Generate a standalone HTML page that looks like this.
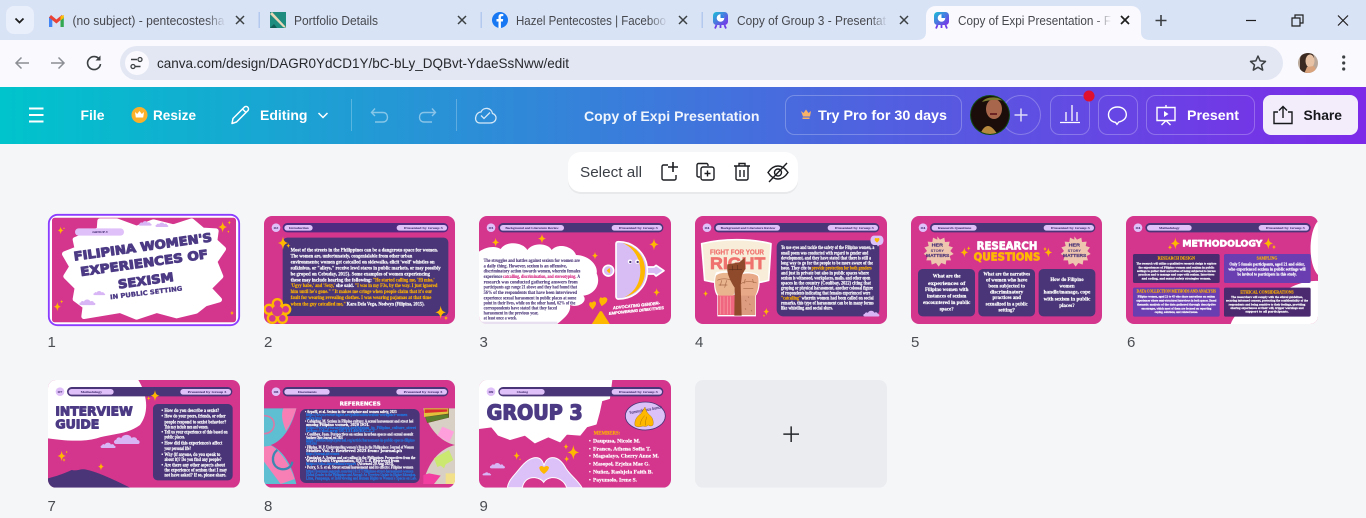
<!DOCTYPE html>
<html lang="en"><head><meta charset="utf-8"><title>Copy of Expi Presentation</title>
<style>
html,body{margin:0;padding:0;width:1366px;height:518px;overflow:hidden;background:#f5f6f8}
svg{display:block;position:absolute;left:0;top:0}
text{font-family:"Liberation Sans",sans-serif}
.t{font-size:12.5px;fill:#46484d}
.h{font-size:14px;font-weight:bold;fill:#fff}
.w{font-family:"Liberation Serif",serif;font-size:15px;font-weight:bold;fill:#fff;stroke:#fff;stroke-width:.5}
.y{font-family:"Liberation Serif",serif;font-size:15px;font-weight:bold;fill:#ffb300;stroke:#ffb300;stroke-width:.4}
.b{font-family:"Liberation Serif",serif;font-size:13.5px;font-weight:bold;fill:#1f7ae8;stroke:#1f7ae8;stroke-width:.4}
.d{font-family:"Liberation Serif",serif;font-size:14.5px;font-weight:bold;fill:#4a3578;stroke:#4a3578;stroke-width:.3}
.p{font-family:"Liberation Serif",serif;font-size:10.5px;font-weight:bold;fill:#4a3578;stroke:#4a3578;stroke-width:.2}
.n{font-size:15px;fill:#4a4d52}
.c{font-family:"DejaVu Sans",sans-serif;font-weight:bold;fill:#4c3a85;stroke:#4c3a85;stroke-width:3;stroke-linejoin:round}
.hd{font-family:"DejaVu Sans",sans-serif;font-weight:bold;stroke-width:2;stroke-linejoin:round}
</style></head><body>
<svg width="1366" height="518" viewBox="0 0 1366 518" xmlns="http://www.w3.org/2000/svg">
<defs>
<linearGradient id="g" x1="0" x2="1" y1="0" y2="0"><stop offset="0" stop-color="#00c4cc"/><stop offset=".5" stop-color="#3f76dc"/><stop offset="1" stop-color="#7d2ae8"/></linearGradient>
<linearGradient id="fade" x1="0" x2="1"><stop offset="0" stop-color="#d8e3f6" stop-opacity="0"/><stop offset="1" stop-color="#d8e3f6"/></linearGradient>
<linearGradient id="fadeA" x1="0" x2="1"><stop offset="0" stop-color="#f9f9fe" stop-opacity="0"/><stop offset="1" stop-color="#f9f9fe"/></linearGradient>
<linearGradient id="cv" x1="0" x2="1" y1="0" y2="1"><stop offset="0" stop-color="#19c3d6"/><stop offset="1" stop-color="#7d2ae8"/></linearGradient>
<path id="s" fill="#ffb800" d="M0-10C1-3 3-1 8 0 3 1 1 3 0 10-1 3-3 1-8 0-3-1-1-3 0-10Z"/>
<path id="cl" fill="#d8b6f5" d="M-30 10C-38 10-38 0-30-1-29-8-20-8-18-4-14-15 4-16 8-5 14-9 22-6 22 0 30 0 30 10 24 10Z"/>
<clipPath id="c1"><rect x="36" y="38" width="552" height="314" rx="8"/></clipPath>
<clipPath id="c2"><rect x="672" y="33" width="573" height="324" rx="24"/></clipPath>
<clipPath id="c3"><rect x="27" y="33" width="576" height="324" rx="24"/></clipPath>
<clipPath id="c4"><rect x="675" y="33" width="576" height="324" rx="24"/></clipPath>
<clipPath id="c5"><rect x="33" y="33" width="573" height="324" rx="24"/></clipPath>
<clipPath id="c6"><rect x="678" y="33" width="576" height="324" rx="24"/></clipPath>
<clipPath id="c7"><rect x="24" y="30" width="576" height="323" rx="24"/></clipPath>
<clipPath id="c8"><rect x="672" y="30" width="573" height="323" rx="24"/></clipPath>
<clipPath id="c9"><rect x="27" y="30" width="576" height="323" rx="24"/></clipPath>
<clipPath id="a1"><circle cx="990" cy="115" r="19"/></clipPath>
<clipPath id="a2"><circle cx="1308" cy="63" r="10"/></clipPath>
</defs>

<!-- browser chrome -->
<rect width="1366" height="40" fill="#d8e3f6"/>
<rect y="40" width="1366" height="47" fill="#f9f9fe"/>
<rect x="6" y="6" width="28" height="28" rx="8" fill="#e9effb"/>
<path d="M15.500 18.500l4 4 4-4" fill="none" stroke="#1f1f1f" stroke-width="1.800"/>
<!-- gmail -->
<rect x="49" y="17" width="3.300" height="10" fill="#4285f4"/><rect x="60.500" y="17" width="3.300" height="10" fill="#34a853"/>
<path d="M49 17.500L51 15l5.400 4.500L61.800 15l2 2.500-7.400 6z" fill="#ea4335"/><path d="M60.500 16.200l3.300-1.200v3l-3.300 2.500z" fill="#fbbc04"/>
<text class="t" x="72.500" y="25" textLength="152" lengthAdjust="spacingAndGlyphs">(no subject) - pentecostesha</text>
<rect x="206" y="10" width="20" height="20" fill="url(#fade)"/>
<path d="M236 16l8 8m0-8l-8 8" stroke="#3c4043" stroke-width="1.500"/>
<rect x="258.500" y="12" width="1.500" height="16" fill="#b4c9ee"/>
<!-- portfolio -->
<rect x="270" y="12" width="16" height="16" fill="#1e8d80"/><path d="M272 12l13 14 1 2-3-1-13-13z" fill="#e9d8b8"/><path d="M270 28l4-4 3 4z" fill="#0f5d55"/>
<text class="t" x="294" y="25" textLength="84" lengthAdjust="spacingAndGlyphs">Portfolio Details</text>
<path d="M458 16l8 8m0-8l-8 8" stroke="#3c4043" stroke-width="1.500"/>
<rect x="480.500" y="12" width="1.500" height="16" fill="#b4c9ee"/>
<!-- facebook -->
<circle cx="500" cy="20" r="8" fill="#1877f2"/><path d="M498.500 28v-6.500h-2V19h2v-2c0-2 1.200-3.100 3-3.100l1.800.1v2.100h-1.200c-1 0-1.200.5-1.200 1.100V19h2.300l-.4 2.500h-1.900V28z" fill="#fff"/>
<text class="t" x="516" y="25" textLength="150" lengthAdjust="spacingAndGlyphs">Hazel Pentecostes | Faceboo</text>
<rect x="648" y="10" width="20" height="20" fill="url(#fade)"/>
<path d="M679 16l8 8m0-8l-8 8" stroke="#3c4043" stroke-width="1.500"/>
<rect x="701.500" y="12" width="1.500" height="16" fill="#b4c9ee"/>
<!-- canva icon 1 -->
<g id="ci"><rect x="713" y="12" width="15" height="13" rx="3.500" fill="url(#cv)"/><path d="M716.500 25l-1.500 3.500M724.500 25l1.500 3.500M720.500 25v3" stroke="#6d3ce8" stroke-width="1.800"/><circle cx="720.500" cy="18" r="3.800" fill="#fff"/><path d="M720.500 18v-3.800a3.800 3.800 0 0 1 3.800 3.800z" fill="#2d7fe0"/></g>
<text class="t" x="737" y="25" textLength="149" lengthAdjust="spacingAndGlyphs">Copy of Group 3 - Presentat</text>
<rect x="870" y="10" width="18" height="20" fill="url(#fade)"/>
<path d="M900 16l8 8m0-8l-8 8" stroke="#3c4043" stroke-width="1.500"/>
<!-- active tab -->
<path d="M917 40c6 0 9-3 9-8V16c0-6 4-10 10-10h195c6 0 10 4 10 10v16c0 5 3 8 9 8z" fill="#f9f9fe"/>
<use href="#ci" x="221"/>
<text class="t" x="958" y="25" textLength="153" lengthAdjust="spacingAndGlyphs">Copy of Expi Presentation - F</text>
<rect x="1094" y="10" width="18" height="20" fill="url(#fadeA)"/>
<path d="M1121 16l8 8m0-8l-8 8" stroke="#1f1f1f" stroke-width="1.700"/>
<path d="M1161 15v11m-5.500-5.500h11" stroke="#3c4043" stroke-width="1.600"/>
<path d="M1246 20.500h10" stroke="#1f1f1f" stroke-width="1.200"/>
<path d="M1292 18h8v8h-8zM1295 18v-3h8v8h-3" fill="none" stroke="#1f1f1f" stroke-width="1.200"/>
<path d="M1338 15.500l10 10m0-10l-10 10" stroke="#1f1f1f" stroke-width="1.200"/>
<!-- toolbar -->
<path d="M29 63H16m5.500-5.500L16 63l5.500 5.500" fill="none" stroke="#8b8e94" stroke-width="1.500"/>
<path d="M51 63h13m-5.500-5.500L64 63l-5.500 5.500" fill="none" stroke="#8b8e94" stroke-width="1.500"/>
<path d="M99.500 59.500a6.500 6.500 0 1 0 1 4.500" fill="none" stroke="#3c4043" stroke-width="1.600"/><path d="M100.500 55.500v5h-5z" fill="#3c4043"/>
<rect x="120" y="46" width="1163" height="34" rx="17" fill="#e3e7f3"/>
<circle cx="137" cy="63" r="12" fill="#f9f9fe"/>
<path d="M131 59.500h6M140.500 66.500h-6" stroke="#3c4043" stroke-width="1.400"/><circle cx="140" cy="59.500" r="2" fill="none" stroke="#3c4043" stroke-width="1.300"/><circle cx="133" cy="66.500" r="2" fill="none" stroke="#3c4043" stroke-width="1.300"/>
<text x="157" y="68" font-size="14" fill="#26282c" textLength="412" lengthAdjust="spacingAndGlyphs">canva.com/design/DAGR0YdCD1Y/bC-bLy_DQBvt-YdaeSsNww/edit</text>
<path d="M1258 56l2.200 4.900 5.300.5-4 3.500 1.200 5.200-4.700-2.800-4.700 2.800 1.200-5.200-4-3.500 5.300-.5z" fill="none" stroke="#3c4043" stroke-width="1.500" stroke-linejoin="round"/>
<g clip-path="url(#a2)"><rect x="1298" y="53" width="20" height="20" fill="#b9a79a"/><path d="M1300 73V60c0-6 4-8 8-8s6 3 6 6l-2 6-4 9z" fill="#3a2a22"/><ellipse cx="1310" cy="61" rx="4.500" ry="6.500" fill="#e8c2a4"/><path d="M1304 74l3-7 7-1 4 8z" fill="#d9a37d"/></g>
<circle cx="1343.700" cy="57" r="1.600" fill="#3c4043"/><circle cx="1343.700" cy="63" r="1.600" fill="#3c4043"/><circle cx="1343.700" cy="69" r="1.600" fill="#3c4043"/>

<!-- canva header -->
<rect y="87" width="1366" height="57" fill="url(#g)"/>
<path d="M29 108.500h14.500M29 115h14.500M29 121.500h14.500" stroke="#fff" stroke-width="2"/>
<text class="h" x="80.500" y="120" textLength="24" lengthAdjust="spacingAndGlyphs">File</text>
<circle cx="139.500" cy="115" r="8" fill="#fbb02a"/><path d="M135 112l2.200 2 2.300-3 2.300 3 2.200-2-.8 5.500h-7.400z" fill="#fff"/>
<text class="h" x="153" y="120" textLength="43" lengthAdjust="spacingAndGlyphs">Resize</text>
<path d="M232 123.500l1-5 11.500-11.500a2.500 2.500 0 0 1 3.500 3.500L236.500 122zM242.500 109l3.500 3.500" fill="none" stroke="#fff" stroke-width="1.500" stroke-linejoin="round"/>
<text class="h" x="260" y="120" textLength="47.500" lengthAdjust="spacingAndGlyphs">Editing</text>
<path d="M318.500 113l4.500 4.500 4.500-4.500" fill="none" stroke="#fff" stroke-width="1.500"/>
<rect x="351" y="99" width="1" height="32" fill="#fff" opacity=".25"/>
<path d="M375 108.500l-3.500 4 3.500 3.500M372 112.500h11c6 0 6 9.500 0 9.500h-8" fill="none" stroke="#fff" stroke-opacity=".45" stroke-width="1.400"/>
<path d="M432 108.500l3.500 4-3.500 3.500M435 112.500h-11c-6 0-6 9.500 0 9.500h8" fill="none" stroke="#fff" stroke-opacity=".45" stroke-width="1.400"/>
<rect x="456" y="99" width="1" height="32" fill="#fff" opacity=".25"/>
<path d="M480 123h10c7 0 8-8 2.500-9.500-1-6-9-7-11.500-1.500-6 0-8 11-1 11z" fill="none" stroke="#fff" stroke-opacity=".8" stroke-width="1.300"/><path d="M481 115.500l3 3 6-6" fill="none" stroke="#fff" stroke-opacity=".8" stroke-width="1.300"/>
<text class="h" x="584" y="121" textLength="175.500" lengthAdjust="spacingAndGlyphs" fill-opacity=".92">Copy of Expi Presentation</text>
<rect x="785.500" y="95.500" width="176" height="39" rx="9" fill="none" stroke="#fff" stroke-opacity=".25"/>
<path d="M801 111l2.500 2 2.500-3.500 2.500 3.500 2.500-2-1 5.500h-7z" fill="#f7b267"/><rect x="802.500" y="117.500" width="7" height="1.500" fill="#f7b267"/>
<text class="h" x="818" y="120" textLength="129" lengthAdjust="spacingAndGlyphs">Try Pro for 30 days</text>
<circle cx="1021" cy="115" r="19.500" fill="none" stroke="#fff" stroke-opacity=".25"/>
<path d="M1021 108.500v13M1014.500 115h13" stroke="#fff" stroke-opacity=".8" stroke-width="1.500"/>
<circle cx="990" cy="115" r="20" fill="#0f4d12"/>
<g clip-path="url(#a1)"><rect x="970" y="95" width="40" height="40" fill="#1a0d0a"/><ellipse cx="994" cy="109" rx="8" ry="10" fill="#a8674c"/><path d="M982 102c4-6 16-6 22-1-8-2-15-1-22 1z" fill="#7a7a30"/><path d="M980 135c2-6 5-9 8-9s6 3 10 9z" fill="#b5883e"/><path d="M990 114h7" stroke="#6a2222" stroke-width="2"/></g>
<rect x="1050.500" y="95.500" width="39" height="39" rx="9" fill="none" stroke="#fff" stroke-opacity=".25"/>
<path d="M1060 122.500h20M1066 121v-9M1072 121v-16M1077 121v-9" stroke="#fff" stroke-width="1.300" fill="none"/>
<circle cx="1089" cy="96" r="5.500" fill="#e0102f"/>
<rect x="1098.500" y="95.500" width="39" height="39" rx="9" fill="none" stroke="#fff" stroke-opacity=".25"/>
<path d="M1117.500 107c-5.500 0-9 3.500-9 7.800 0 4 3 7 7 7.500l1.500 2 1.800-2.300c4-.8 7.500-3.500 7.500-7.300 0-4.300-3.300-7.700-8.800-7.700z" fill="none" stroke="#fff" stroke-width="1.400"/>
<rect x="1146.500" y="95.500" width="108" height="39" rx="9" fill="none" stroke="#fff" stroke-opacity=".25"/>
<path d="M1157 107.500h18v13h-18zM1166 105v2.500M1166 120.500l-4.500 4.500M1166 120.500l4.500 4.500" fill="none" stroke="#fff" stroke-width="1.400"/><path d="M1164 111l4.500 3-4.500 3z" fill="#fff"/>
<text class="h" x="1187" y="120" textLength="52" lengthAdjust="spacingAndGlyphs">Present</text>
<rect x="1263" y="95" width="95" height="40" rx="8" fill="#f3edfb"/>
<path d="M1283 118V106.500m-4 4l4-4 4 4M1278 112h-4v11.500h18V112h-4" fill="none" stroke="#16181c" stroke-width="1.400"/>
<text class="h" style="fill:#16181c" x="1303.500" y="120" textLength="38.500" lengthAdjust="spacingAndGlyphs">Share</text>

<!-- floating toolbar -->
<rect x="568" y="152" width="230" height="40" rx="13" fill="#000" opacity=".05" transform="translate(0 2)"/>
<rect x="568" y="152" width="230" height="40" rx="13" fill="#fff"/>
<text x="580" y="177" font-size="14.500" fill="#3b3f46" textLength="62" lengthAdjust="spacingAndGlyphs">Select all</text>
<g fill="none" stroke="#1b1d21" stroke-width="1.400">
<path d="M668 165h-4.500a1.500 1.500 0 0 0-1.500 1.500v12a1.500 1.500 0 0 0 1.500 1.500h11a1.500 1.500 0 0 0 1.500-1.500V175"/><path d="M673 162v10M668 167h10" stroke-width="1.600"/>
<path d="M700 177h-1.500a1.500 1.500 0 0 1-1.500-1.500V165a1.500 1.500 0 0 1 1.500-1.500h8a1.500 1.500 0 0 1 1.500 1.500v1"/><rect x="701" y="167" width="13" height="13" rx="2"/><path d="M707.500 170.500v6M704.500 173.500h6"/>
<path d="M734 166h16M739 166v-2.500h6v2.500M736 166v12.500a1.500 1.500 0 0 0 1.500 1.500h9a1.500 1.500 0 0 0 1.500-1.500V166M740 170v7M744 170v7"/>
<path d="M768 172.500c3-4.500 6.500-6.500 10-6.500s7 2 10 6.500c-3 4.500-6.500 6.500-10 6.500s-7-2-10-6.500z"/><circle cx="778" cy="172.500" r="3.500"/><path d="M769 182l18-19"/>
</g>

<!-- labels -->
<text class="n" x="47.500" y="347">1</text><text class="n" x="264" y="347">2</text><text class="n" x="479.500" y="347">3</text><text class="n" x="695" y="347">4</text><text class="n" x="911" y="347">5</text><text class="n" x="1127" y="347">6</text>
<text class="n" x="47.500" y="511">7</text><text class="n" x="264" y="511">8</text><text class="n" x="479.500" y="511">9</text>

<!-- ROW 1 A -->
<g transform="translate(40 205) scale(.33333)">
<rect x="26.500" y="29.500" width="571" height="331" rx="26" fill="#fff" stroke="#8b3dff" stroke-width="5.500"/>
<g clip-path="url(#c1)">
<rect x="36" y="38" width="552" height="314" fill="#d4358d"/>
<path fill="#fff" stroke="#fff" stroke-width="16" stroke-linejoin="round" d="M180 48L178 74 106 104 112 132 74 147 96 185 78 214 112 248 106 282 136 304 132 334 240 316 290 336 350 316 410 332 468 318 496 296 538 284 506 250 542 214 524 170 550 132 524 108 528 78 488 76 455 48 400 66 340 51 290 70 230 48Z"/>
<use href="#cl" transform="translate(318 56) scale(.6)"/><use href="#cl" transform="translate(368 60) scale(.6)"/>
<use href="#cl" transform="translate(180 265) scale(.55)"/><use href="#cl" transform="translate(145 293) scale(.75)"/>
<rect x="105" y="70" width="147" height="22" rx="11" fill="#e0c0f8"/>
<text class="p" x="157" y="84" textLength="46" lengthAdjust="spacingAndGlyphs" font-style="italic">GROUP 3</text>
<text class="c" font-size="36" transform="translate(103 167) rotate(-8)" textLength="418" lengthAdjust="spacingAndGlyphs">FILIPINA WOMEN'S</text>
<text class="c" font-size="36" transform="translate(123 213) rotate(-8)" textLength="386" lengthAdjust="spacingAndGlyphs">EXPERIENCES OF</text>
<text class="c" font-size="36" transform="translate(236 251) rotate(-8)" textLength="168" lengthAdjust="spacingAndGlyphs">SEXISM</text>
<text class="c" style="stroke-width:1" font-size="19" transform="translate(211 283) rotate(-7)" textLength="218" lengthAdjust="spacingAndGlyphs">IN  PUBLIC SETTING</text>
<use href="#s" transform="translate(548 66) scale(1.700)"/><use href="#s" transform="translate(568 53) scale(.7)"/><use href="#s" transform="translate(565 80) scale(.5)"/>
<use href="#s" transform="translate(62 76) scale(1.200)"/><use href="#s" transform="translate(72 70) scale(.4)"/>
<use href="#s" transform="translate(52 305) scale(1.400)"/><use href="#s" transform="translate(65 290) scale(.6)"/>
<use href="#s" transform="translate(576 324) scale(.8)"/>
</g>
<!-- slide 2 -->
<g clip-path="url(#c2)">
<rect x="672" y="33" width="573" height="324" fill="#d4358d"/>
<rect x="728" y="54" width="497" height="28" rx="14" fill="#4f2a80"/>
<circle cx="708" cy="68" r="13" fill="#e0c0f8"/><text class="p" x="701" y="72" textLength="14" lengthAdjust="spacingAndGlyphs">02</text>
<rect x="733" y="60" width="85" height="17" rx="8.500" fill="#e0c0f8"/><text class="p" x="747" y="72" textLength="59" lengthAdjust="spacingAndGlyphs">Introduction</text>
<rect x="1070" y="60" width="151" height="17" rx="8.500" fill="#e0c0f8"/><text class="p" x="1092" y="72" textLength="116" lengthAdjust="spacingAndGlyphs">Presented by Group 3</text>
<rect x="728" y="98" width="497" height="235" rx="14" fill="#4a3578"/>
<text class="w" x="752" y="140" textLength="442" lengthAdjust="spacingAndGlyphs">Most of the streets in the Philippines can be a dangerous space for women.</text>
<text class="w" x="752" y="158" textLength="365" lengthAdjust="spacingAndGlyphs">The women are, unfortunately, congenialable from other urban</text>
<text class="w" x="752" y="176" textLength="432" lengthAdjust="spacingAndGlyphs">environments; women get catcalled on sidewalks, elicit 'wolf' whistles on</text>
<text class="w" x="752" y="194" textLength="450" lengthAdjust="spacingAndGlyphs">sulkinbus, or "alleys," receive lewd stares in public markets, or may possibly</text>
<text class="w" x="752" y="211" textLength="418" lengthAdjust="spacingAndGlyphs">be groped on Cebuday, 2015). Some examples of women experiencing</text>
<text class="w" x="752" y="229" textLength="244" lengthAdjust="spacingAndGlyphs">these may include hearing the following:</text><text class="y" x="998" y="229" textLength="186" lengthAdjust="spacingAndGlyphs">"He started calling me, 'Hi miss,'</text>
<text class="y" x="752" y="246" textLength="134" lengthAdjust="spacingAndGlyphs">'Ugyy babe,' and 'Sexy,'</text><text class="w" x="888" y="246" textLength="54" lengthAdjust="spacingAndGlyphs">she said.</text><text class="y" x="944" y="246" textLength="248" lengthAdjust="spacingAndGlyphs">"I was in my F3s, by the way. I just ignored</text>
<text class="y" x="752" y="264" textLength="424" lengthAdjust="spacingAndGlyphs">him until he's gone." "It makes me cringe when people claim that it's our</text>
<text class="y" x="752" y="282" textLength="422" lengthAdjust="spacingAndGlyphs">fault for wearing revealing clothes. I was wearing pajamas at that time</text>
<text class="y" x="752" y="302" textLength="166" lengthAdjust="spacingAndGlyphs">when the guy catcalled me,"</text><text class="w" x="920" y="302" textLength="234" lengthAdjust="spacingAndGlyphs">Kara Dela Vega, Nodwyn (Filipina, 2015).</text>
<g fill="#ffb800"><circle cx="712" cy="296" r="17"/><circle cx="737" cy="313" r="17"/><circle cx="727" cy="340" r="17"/><circle cx="697" cy="340" r="17"/><circle cx="687" cy="313" r="17"/></g>
<g fill="#d4358d"><circle cx="712" cy="296" r="10"/><circle cx="737" cy="313" r="10"/><circle cx="727" cy="340" r="10"/><circle cx="697" cy="340" r="10"/><circle cx="687" cy="313" r="10"/><circle cx="712" cy="318" r="16"/></g>
<use href="#s" transform="translate(729 114) scale(2)"/><use href="#s" transform="translate(745 122) scale(.8)"/>
<use href="#s" transform="translate(1202 322) scale(2)"/><use href="#s" transform="translate(1218 339) scale(.8)"/>
</g>
</g>

<!-- ROW 1 B -->
<g transform="translate(470 205) scale(.33333)">
<g clip-path="url(#c3)">
<rect x="27" y="33" width="576" height="324" fill="#d4358d"/>
<path fill="#fff" d="M27 140C50 125 75 122 92 132 110 105 160 112 172 135 190 110 235 115 245 135 265 112 310 125 318 150 355 150 385 180 380 205 395 240 370 270 340 272 355 290 325 310 300 300 305 325 275 345 262 357H27Z"/>
<rect x="27" y="350" width="235" height="7" fill="#e8e0f0"/>
<rect x="85" y="54" width="495" height="28" rx="14" fill="#4a3578"/>
<circle cx="63" cy="68" r="13" fill="#e0c0f8"/><text class="p" x="56" y="72" textLength="14" lengthAdjust="spacingAndGlyphs">03</text>
<rect x="90" y="60" width="192" height="17" rx="8.500" fill="#e0c0f8"/><text class="p" x="106" y="72" textLength="160" lengthAdjust="spacingAndGlyphs">Background and Literature Review</text>
<rect x="425" y="60" width="151" height="17" rx="8.500" fill="#e0c0f8"/><text class="p" x="447" y="72" textLength="116" lengthAdjust="spacingAndGlyphs">Presented by Group 3</text>
<g>
<text class="d" x="41" y="171" textLength="289" lengthAdjust="spacingAndGlyphs">The struggles and battles against sexism for women are</text>
<text class="d" x="41" y="187" textLength="250" lengthAdjust="spacingAndGlyphs">a daily thing. However, sexism is an offensive,</text>
<text class="d" x="41" y="203" textLength="290" lengthAdjust="spacingAndGlyphs">discriminatory action towards women, wherein females</text>
<text class="d" x="41" y="219" textLength="56" lengthAdjust="spacingAndGlyphs">experience</text><text class="d" style="fill:#d4207f;stroke:#d4207f" x="99" y="219" textLength="220" lengthAdjust="spacingAndGlyphs">catcalling, discrimination, and stereotyping.</text><text class="d" x="322" y="219" textLength="8" lengthAdjust="spacingAndGlyphs">A</text>
<text class="d" x="41" y="235" textLength="282" lengthAdjust="spacingAndGlyphs">research was conducted gathering answers from</text>
<text class="d" x="41" y="251" textLength="280" lengthAdjust="spacingAndGlyphs">participants age range 21 above and they had found that</text>
<text class="d" x="41" y="267" textLength="280" lengthAdjust="spacingAndGlyphs">56% of the respondents that have been interviewed</text>
<text class="d" x="41" y="283" textLength="278" lengthAdjust="spacingAndGlyphs">experience sexual harassment in public places at some</text>
<text class="d" x="41" y="298" textLength="275" lengthAdjust="spacingAndGlyphs">point in their lives, while on the other hand, 62% of the</text>
<text class="d" x="41" y="313" textLength="220" lengthAdjust="spacingAndGlyphs">correspondents have stated that they faced</text>
<text class="d" x="41" y="328" textLength="164" lengthAdjust="spacingAndGlyphs">harassment in the previous year,</text>
<text class="d" x="41" y="343" textLength="100" lengthAdjust="spacingAndGlyphs">at least once a week.</text>
</g>
<circle cx="415" cy="197" r="16" fill="#d8bdf5" stroke="#fff" stroke-width="5"/>
<path d="M530 186h22l6-5 24 16-24 16-6-6h-22z" fill="#d8bdf5" stroke="#fff" stroke-width="5" stroke-linejoin="round"/>
<path d="M445 110C495 110 532 150 532 197 532 245 495 282 445 282 440 282 438 278 438 275V117C438 112 441 110 445 110Z" fill="#d8bdf5" stroke="#fff" stroke-width="5"/>
<path d="M458 114C505 125 525 160 525 197 525 235 505 265 462 277 495 262 511 232 511 197 511 165 495 130 458 114Z" fill="#ffb800"/>
<path d="M410 197l8-8c3 3 4 12 0 16z" fill="#ffb800"/>
<circle cx="480" cy="170" r="6.500" fill="#fff"/><circle cx="502" cy="170" r="6.500" fill="#fff"/><circle cx="481" cy="171" r="3.500" fill="#4a3578"/><circle cx="503" cy="171" r="3.500" fill="#4a3578"/>
<path d="M366 293c6-8 14-2 12 3 0 6-6 12-10 18-5-6-12-12-10-18 0-5 5-6 8-3z" fill="#ffb800"/>
<path d="M395 280c8-8 18-2 16 4 0 8-8 14-14 20-6-8-12-14-9-22 0-4 4-5 7-2z" fill="#ffb800" transform="rotate(8 400 290)"/>
<path d="M365 358l24-38c2-2 5-2 7 0l24 38z" fill="#ffb800"/>
<g transform="translate(422 322) rotate(-6)">
<text x="8" y="-8" font-size="13" font-weight="bold" fill="#fff" stroke="#fff" stroke-width=".8" textLength="142" lengthAdjust="spacingAndGlyphs" font-style="italic">ADVOCATING GENDER-</text>
<text x="-6" y="7" font-size="12" font-weight="bold" fill="#fff" stroke="#fff" stroke-width=".8" textLength="166" lengthAdjust="spacingAndGlyphs" font-style="italic">EMPOWERING DIRECTIVES</text></g>
<use href="#s" transform="translate(77 112) scale(1.400)"/><use href="#s" transform="translate(216 101) scale(1.500)"/><use href="#s" transform="translate(552 118) scale(1.800)"/><use href="#s" transform="translate(375 152) scale(1.200)"/><use href="#s" transform="translate(560 262) scale(1.300)"/>
</g>
<!-- slide 4 -->
<g clip-path="url(#c4)">
<rect x="675" y="33" width="576" height="324" fill="#d4358d"/>
<rect x="732" y="54" width="496" height="28" rx="14" fill="#4a3578"/>
<circle cx="711" cy="68" r="13" fill="#e0c0f8"/><text class="p" x="704" y="72" textLength="14" lengthAdjust="spacingAndGlyphs">04</text>
<rect x="737" y="60" width="193" height="17" rx="8.500" fill="#e0c0f8"/><text class="p" x="752" y="72" textLength="164" lengthAdjust="spacingAndGlyphs">Background and Literature Review</text>
<rect x="1073" y="60" width="151" height="17" rx="8.500" fill="#e0c0f8"/><text class="p" x="1095" y="72" textLength="116" lengthAdjust="spacingAndGlyphs">Presented by Group 3</text>
<path d="M695 116C760 100 840 100 903 116L896 226C850 240 760 240 704 226Z" fill="#f7edd8" stroke="#fff" stroke-width="5" stroke-linejoin="round"/>
<text x="720" y="148" font-size="21" font-weight="bold" fill="#f0726f" stroke="#f0726f" stroke-width=".6" textLength="162" lengthAdjust="spacingAndGlyphs" font-family="DejaVu Sans">FIGHT FOR YOUR</text>
<text x="720" y="192" font-size="50" font-weight="bold" fill="#f0726f" stroke="#f0726f" stroke-width="2" textLength="166" lengthAdjust="spacingAndGlyphs" font-family="DejaVu Sans">RIGHT</text>
<!-- white silhouette -->
<path d="M738 202C760 196 790 198 800 206 830 196 862 202 868 214 872 240 866 262 858 272V334H742V272C732 262 728 226 738 202Z" fill="#fff"/>
<path d="M762 270h32v60h-50v-60z" fill="#f0657f"/><path d="M752 274v54M762 274v54M772 274v54M782 274v54" stroke="#f7a0a8" stroke-width="2"/>
<path d="M738 212C750 200 785 202 795 212 800 232 796 258 790 272H746C736 258 732 232 738 212Z" fill="#e9b58f"/>
<path d="M742 226c10-6 30-6 44 0M746 240h26M770 226l-6 22M755 226l-4 16" fill="none" stroke="#a86a48" stroke-width="2"/>
<path d="M812 270h44v60h-44z" fill="#dd9c7f"/><path d="M826 285l3 4M838 296l3 4M825 310l3 4M843 315l3 4M834 275l3 3" stroke="#a96a50" stroke-width="2"/>
<path d="M808 212C820 202 855 204 864 214 868 232 864 258 856 272H814C806 256 802 232 808 212Z" fill="#e8a988"/>
<path d="M812 236c14-8 34-8 48-2M820 250h30M826 222l-4 14M848 222l2 12" fill="none" stroke="#a86a48" stroke-width="2"/>
<path d="M772 178L808 172 824 158 826 192 816 210 812 240 815 332H793L794 248C784 232 768 206 772 178Z" fill="#8e4a2b"/>
<path d="M776 194h40M788 182v14M802 180v14" stroke="#5e2e1a" stroke-width="2" fill="none"/>
<rect x="920" y="106" width="308" height="228" rx="20" fill="#4a3578"/>
<g>
<text class="w" x="933" y="132" textLength="280" lengthAdjust="spacingAndGlyphs">To use eyes and tackle the safety of the Filipino women, a</text>
<text class="w" x="933" y="148" textLength="262" lengthAdjust="spacingAndGlyphs">small poem was conducted with regard to gender and</text>
<text class="w" x="933" y="163" textLength="270" lengthAdjust="spacingAndGlyphs">development, and they have stated that there is still a</text>
<text class="w" x="933" y="178" textLength="276" lengthAdjust="spacingAndGlyphs">long way to go for the people to be more aware of the</text>
<text class="w" x="933" y="193" textLength="90" lengthAdjust="spacingAndGlyphs">issue. They cite to</text><text class="y" x="1025" y="193" textLength="180" lengthAdjust="spacingAndGlyphs">provide protection for both genders</text>
<text class="w" x="933" y="208" textLength="264" lengthAdjust="spacingAndGlyphs">and just in private but also in public spaces where</text>
<text class="w" x="933" y="223" textLength="268" lengthAdjust="spacingAndGlyphs">sexism is witnessed, workplaces, malls, and other open</text>
<text class="w" x="933" y="238" textLength="270" lengthAdjust="spacingAndGlyphs">spaces in the country (Coulibay, 2022) citing that</text>
<text class="w" x="933" y="253" textLength="276" lengthAdjust="spacingAndGlyphs">groping or physical harassment, another colossal figure</text>
<text class="w" x="933" y="268" textLength="268" lengthAdjust="spacingAndGlyphs">of respondents indicating that females experienced were</text>
<text class="y" x="933" y="284" textLength="60" lengthAdjust="spacingAndGlyphs">"catcalling"</text><text class="w" x="995" y="284" textLength="216" lengthAdjust="spacingAndGlyphs">wherein women had been called on social</text>
<text class="w" x="933" y="299" textLength="278" lengthAdjust="spacingAndGlyphs">remarks, this type of harassment can be in many forms</text>
<text class="w" x="933" y="314" textLength="156" lengthAdjust="spacingAndGlyphs">like whistling and social slurs.</text>
</g>
<path d="M1212 92h18c14 0 14 28 0 28h-2l-4 5-3-5h-9c-14 0-14-28 0-28z" fill="#dcc0f8"/><path d="M1221 101c3-4 9-1 7 3 0 3-4 6-7 9-3-3-7-6-7-9-1-4 4-7 7-3z" fill="#ffb800"/>
<use href="#cl" transform="translate(1207 327) scale(.75)"/>
<use href="#s" transform="translate(707 266) scale(1)"/><use href="#s" transform="translate(889 320) scale(1.200)"/><use href="#s" transform="translate(882 332) scale(.5)"/>
</g>
</g>

<!-- ROW 1 C -->
<g transform="translate(900 205) scale(.33333)">
<g clip-path="url(#c5)">
<rect x="33" y="33" width="573" height="324" fill="#d4358d"/>
<rect x="90" y="54" width="496" height="28" rx="14" fill="#4a3578"/>
<circle cx="69" cy="68" r="13" fill="#e0c0f8"/><text class="p" x="62" y="72" textLength="14" lengthAdjust="spacingAndGlyphs">04</text>
<rect x="95" y="60" width="135" height="17" rx="8.500" fill="#e0c0f8"/><text class="p" x="114" y="72" textLength="100" lengthAdjust="spacingAndGlyphs">Research Questions</text>
<rect x="431" y="60" width="151" height="17" rx="8.500" fill="#e0c0f8"/><text class="p" x="453" y="72" textLength="116" lengthAdjust="spacingAndGlyphs">Presented by Group 3</text>
<g id="st"><path fill="#eec5ae" d="M112 94l8 10 13-6 2 13 14-1-3 13 13 4-8 11 10 9-12 6 4 13-14 0-2 13-13-5-8 11-8-11-13 5-2-13-14 0 4-13-12-6 10-9-8-11 13-4-3-13 14 1 2-13 13 6z"/>
<text x="95" y="124" font-size="15" font-weight="bold" fill="#4a3578" stroke="#4a3578" stroke-width=".5" textLength="34" lengthAdjust="spacingAndGlyphs" font-family="Liberation Mono">HER</text>
<text x="92" y="141" font-size="12" font-weight="bold" fill="#4a3578" textLength="40" lengthAdjust="spacingAndGlyphs" font-family="Liberation Mono">STORY</text>
<text x="78" y="156" font-size="15" font-weight="bold" fill="#4a3578" stroke="#4a3578" stroke-width=".5" textLength="70" lengthAdjust="spacingAndGlyphs" font-family="Liberation Mono">MATTERS</text></g>
<use href="#st" x="411"/>
<text class="hd" font-size="31" x="230" y="133" fill="#fff" stroke="#fff" textLength="182" lengthAdjust="spacingAndGlyphs">RESEARCH</text>
<text class="hd" font-size="31" x="221" y="166" fill="#ffb800" stroke="#ffb800" textLength="200" lengthAdjust="spacingAndGlyphs">QUESTIONS</text>
<use href="#s" transform="translate(193 142) scale(1.500)"/><use href="#s" transform="translate(206 130) scale(.7)"/><use href="#s" transform="translate(445 142) scale(1.500)"/><use href="#s" transform="translate(435 132) scale(.7)"/>
<rect x="54" y="192" width="171" height="142" rx="14" fill="#4a3578"/><rect x="235" y="192" width="170" height="142" rx="14" fill="#4a3578"/><rect x="416" y="192" width="170" height="142" rx="14" fill="#4a3578"/>
<g text-anchor="middle">
<text class="w" x="140" y="218">What are the</text><text class="w" x="140" y="240" textLength="112" lengthAdjust="spacingAndGlyphs">experiences of</text><text class="w" x="140" y="258" textLength="130" lengthAdjust="spacingAndGlyphs">Filipino women with</text><text class="w" x="140" y="278" textLength="118" lengthAdjust="spacingAndGlyphs">instances of sexism</text><text class="w" x="140" y="297" textLength="142" lengthAdjust="spacingAndGlyphs">encountered in public</text><text class="w" x="140" y="317">space?</text>
<text class="w" x="320" y="212" textLength="140" lengthAdjust="spacingAndGlyphs">What are the narratives</text><text class="w" x="320" y="229" textLength="124" lengthAdjust="spacingAndGlyphs">of women who have</text><text class="w" x="320" y="247" textLength="110" lengthAdjust="spacingAndGlyphs">been subjected to</text><text class="w" x="320" y="265" textLength="100" lengthAdjust="spacingAndGlyphs">discriminatory</text><text class="w" x="320" y="282">practices and</text><text class="w" x="320" y="301" textLength="126" lengthAdjust="spacingAndGlyphs">sexualized in a public</text><text class="w" x="320" y="320">setting?</text>
<text class="w" x="501" y="228" textLength="100" lengthAdjust="spacingAndGlyphs">How do Filipino</text><text class="w" x="501" y="248">women</text><text class="w" x="501" y="266" textLength="140" lengthAdjust="spacingAndGlyphs">handle/manage, cope</text><text class="w" x="501" y="287" textLength="140" lengthAdjust="spacingAndGlyphs">with sexism in public</text><text class="w" x="501" y="306">places?</text>
</g>
</g>
<!-- slide 6 -->
<g clip-path="url(#c6)">
<rect x="678" y="33" width="576" height="324" fill="#d4358d"/>
<path d="M1256 46C1225 75 1222 180 1256 212Z" fill="#fff"/>
<path d="M992 357C1010 310 1050 300 1110 292 1150 250 1210 225 1256 228V357Z" fill="#fff"/>
<rect x="736" y="54" width="496" height="28" rx="14" fill="#4a3578"/>
<circle cx="714" cy="68" r="13" fill="#e0c0f8"/><text class="p" x="707" y="72" textLength="14" lengthAdjust="spacingAndGlyphs">04</text>
<rect x="741" y="60" width="134" height="17" rx="8.500" fill="#e0c0f8"/><text class="p" x="777" y="72" textLength="62" lengthAdjust="spacingAndGlyphs">Methodology</text>
<rect x="1076" y="60" width="151" height="17" rx="8.500" fill="#e0c0f8"/><text class="p" x="1098" y="72" textLength="116" lengthAdjust="spacingAndGlyphs">Presented by Group 3</text>
<text class="hd" font-size="27" x="847" y="125" fill="#fff" stroke="#fff" textLength="240" lengthAdjust="spacingAndGlyphs">METHODOLOGY</text>
<use href="#s" transform="translate(826 115) scale(1.800)"/><use href="#s" transform="translate(810 127) scale(.8)"/><use href="#s" transform="translate(1105 115) scale(1.800)"/><use href="#s" transform="translate(1122 126) scale(.8)"/>
<rect x="699" y="147" width="260" height="87" rx="5" fill="#4b2a70"/><rect x="972" y="147" width="260" height="87" rx="5" fill="#6a3db0"/><rect x="699" y="248" width="260" height="87" rx="5" fill="#6a3db0"/><rect x="972" y="248" width="260" height="87" rx="5" fill="#4b2a70"/>
<g text-anchor="middle">
<text class="y" style="font-size:12px" x="829" y="164" textLength="112" lengthAdjust="spacingAndGlyphs">RESEARCH DESIGN</text>
<text class="w" style="font-size:10.500px" x="829" y="179" textLength="240" lengthAdjust="spacingAndGlyphs">The research will utilize a qualitative research design to explore</text>
<text class="w" style="font-size:10.500px" x="829" y="190" textLength="228" lengthAdjust="spacingAndGlyphs">the experiences of Filipino women and sexism in public</text>
<text class="w" style="font-size:10.500px" x="829" y="201" textLength="236" lengthAdjust="spacingAndGlyphs">settings to gather their narratives of being subjected to harass</text>
<text class="w" style="font-size:10.500px" x="829" y="212" textLength="228" lengthAdjust="spacingAndGlyphs">practices and to manage and cope with sexism. Interviews</text>
<text class="w" style="font-size:10.500px" x="829" y="223" textLength="208" lengthAdjust="spacingAndGlyphs">and coding, and sexual safety strategies women.</text>
<text class="y" style="font-size:12px" x="1101" y="164" textLength="62" lengthAdjust="spacingAndGlyphs">SAMPLING</text>
<text class="w" style="font-size:11px" x="1101" y="182" textLength="226" lengthAdjust="spacingAndGlyphs">Only 5 female participants, aged 21 and older,</text>
<text class="w" style="font-size:11px" x="1101" y="197" textLength="232" lengthAdjust="spacingAndGlyphs">who experienced sexism in public settings will</text>
<text class="w" style="font-size:11px" x="1101" y="212" textLength="178" lengthAdjust="spacingAndGlyphs">be invited to participate in this study.</text>
<text class="y" style="font-size:12px" x="829" y="263" textLength="238" lengthAdjust="spacingAndGlyphs">DATA COLLECTION METHODS AND ANALYSIS</text>
<text class="w" style="font-size:10.500px" x="829" y="278" textLength="232" lengthAdjust="spacingAndGlyphs">Filipino women, aged 21 to 45 who share narrations on sexism</text>
<text class="w" style="font-size:10.500px" x="829" y="290" textLength="240" lengthAdjust="spacingAndGlyphs">experiences where semi-structured interviews in both spaces. Based</text>
<text class="w" style="font-size:10.500px" x="829" y="302" textLength="236" lengthAdjust="spacingAndGlyphs">thematic analysis of the data gathered through descriptive</text>
<text class="w" style="font-size:10.500px" x="829" y="313" textLength="210" lengthAdjust="spacingAndGlyphs">encourages, which most of them are focused on reporting</text>
<text class="w" style="font-size:10.500px" x="829" y="324" textLength="130" lengthAdjust="spacingAndGlyphs">coping, solutions, and related issues.</text>
<text class="y" style="font-size:12px" x="1101" y="266" textLength="160" lengthAdjust="spacingAndGlyphs">ETHICAL CONSIDERATIONS</text>
<text class="w" style="font-size:10.500px" x="1101" y="279" textLength="216" lengthAdjust="spacingAndGlyphs">The researchers will comply with the ethical guidelines,</text>
<text class="w" style="font-size:10.500px" x="1101" y="290" textLength="246" lengthAdjust="spacingAndGlyphs">securing informed consent, protecting the confidentiality of the</text>
<text class="w" style="font-size:10.500px" x="1101" y="301" textLength="230" lengthAdjust="spacingAndGlyphs">respondents and being sensitive to their feelings, providing</text>
<text class="w" style="font-size:10.500px" x="1101" y="312" textLength="220" lengthAdjust="spacingAndGlyphs">sharing experiences at their will, trigger warnings and</text>
<text class="w" style="font-size:10.500px" x="1101" y="323" textLength="130" lengthAdjust="spacingAndGlyphs">support to all participants.</text>
</g>
</g>
</g>

<!-- ROW 2 A -->
<g transform="translate(40 370) scale(.33333)">
<g clip-path="url(#c7)">
<rect x="24" y="30" width="576" height="323" fill="#d4358d"/>
<path d="M24 30H295C320 70 330 125 300 165 260 195 215 190 170 205 120 218 60 210 24 205Z" fill="#fff"/>
<path d="M24 353V325C50 318 70 312 95 300 110 304 120 296 135 298 170 305 215 325 270 353Z" fill="#4a3578"/>
<rect x="81" y="51" width="496" height="28" rx="14" fill="#4a3578"/>
<circle cx="60" cy="65" r="13" fill="#e0c0f8"/><text class="p" x="53" y="69" textLength="14" lengthAdjust="spacingAndGlyphs">07</text>
<rect x="86" y="57" width="135" height="17" rx="8.500" fill="#e0c0f8"/><text class="p" x="122" y="69" textLength="64" lengthAdjust="spacingAndGlyphs">Methodology</text>
<rect x="421" y="57" width="152" height="17" rx="8.500" fill="#e0c0f8"/><text class="p" x="443" y="69" textLength="116" lengthAdjust="spacingAndGlyphs">Presented by Group 3</text>
<text class="c" style="stroke-width:3" font-size="38" x="46" y="137" textLength="232" lengthAdjust="spacingAndGlyphs">INTERVIEW</text>
<text class="c" style="stroke-width:3" font-size="38" x="46" y="175" textLength="132" lengthAdjust="spacingAndGlyphs">GUIDE</text>
<use href="#cl" transform="translate(265 210) scale(1.200)"/><use href="#cl" transform="translate(207 227) scale(.7)"/>
<use href="#s" transform="translate(345 77) scale(1.700)"/><use href="#s" transform="translate(326 85) scale(.7)"/>
<use href="#s" transform="translate(65 258) scale(1.600)"/><use href="#s" transform="translate(80 246) scale(.5)"/><use href="#s" transform="translate(72 270) scale(.6)"/><use href="#s" transform="translate(183 290) scale(1.200)"/>
<rect x="339" y="102" width="239" height="229" rx="14" fill="#4a3578"/>
<g>
<text class="w" x="364" y="126">•</text><text class="w" x="373" y="126" textLength="165" lengthAdjust="spacingAndGlyphs">How do you describe a sexist?</text>
<text class="w" x="364" y="143">•</text><text class="w" x="373" y="143" textLength="184" lengthAdjust="spacingAndGlyphs">How do your peers, friends, or other</text>
<text class="w" x="373" y="160" textLength="186" lengthAdjust="spacingAndGlyphs">people respond to sexist behavior?</text>
<text class="w" x="373" y="176" textLength="132" lengthAdjust="spacingAndGlyphs">This may include men and women.</text>
<text class="w" x="364" y="191">•</text><text class="w" x="373" y="191" textLength="190" lengthAdjust="spacingAndGlyphs">Tell us your experience of this based on</text>
<text class="w" x="373" y="206" textLength="62" lengthAdjust="spacingAndGlyphs">public places.</text>
<text class="w" x="364" y="224">•</text><text class="w" x="373" y="224" textLength="174" lengthAdjust="spacingAndGlyphs">How did this experience/s affect</text>
<text class="w" x="373" y="240" textLength="80" lengthAdjust="spacingAndGlyphs">your personal life?</text>
<text class="w" x="364" y="258">•</text><text class="w" x="373" y="258" textLength="168" lengthAdjust="spacingAndGlyphs">Why (if anyone, do you speak to</text>
<text class="w" x="373" y="273" textLength="172" lengthAdjust="spacingAndGlyphs">about it)? Do you find any people?</text>
<text class="w" x="364" y="289">•</text><text class="w" x="373" y="289" textLength="182" lengthAdjust="spacingAndGlyphs">Are there any other aspects about</text>
<text class="w" x="373" y="305" textLength="188" lengthAdjust="spacingAndGlyphs">the experience of sexism that I may</text>
<text class="w" x="373" y="320" textLength="186" lengthAdjust="spacingAndGlyphs">not have asked? If so, please share.</text>
</g>
</g>
<!-- slide 8 -->
<g clip-path="url(#c8)">
<rect x="672" y="30" width="573" height="323" fill="#d4358d"/>
<rect x="728" y="51" width="497" height="28" rx="14" fill="#4a3578"/>
<circle cx="708" cy="65" r="13" fill="#e0c0f8"/><text class="p" x="701" y="69" textLength="14" lengthAdjust="spacingAndGlyphs">08</text>
<rect x="733" y="57" width="136" height="17" rx="8.500" fill="#e0c0f8"/><text class="p" x="774" y="69" textLength="56" lengthAdjust="spacingAndGlyphs">Documents</text>
<rect x="1069" y="57" width="152" height="17" rx="8.500" fill="#e0c0f8"/><text class="p" x="1091" y="69" textLength="116" lengthAdjust="spacingAndGlyphs">Presented by Group 3</text>
<text class="hd" font-size="17" x="899" y="106" fill="#fff" stroke="#fff" style="stroke-width:1" textLength="123" lengthAdjust="spacingAndGlyphs">REFERENCES</text>
<g transform="translate(672 105)">
<path d="M0 10H97C82 70 55 108 20 120 55 135 85 180 97 237H0Z" fill="#5fbfd2"/>
<path d="M58 10H97C90 35 78 60 66 78 55 50 50 30 58 10Z" fill="#f77fb5"/>
<path d="M0 125L22 122C50 140 78 180 92 222L50 237 0 170Z" fill="#f77fb5"/>
<path d="M0 32c22 0 32 14 30 30-2 14-14 24-30 24" fill="none" stroke="#d77aa6" stroke-width="5"/>
<path d="M40 135C20 150 22 185 50 192 72 196 84 182 85 170" fill="none" stroke="#3d87b0" stroke-width="7"/>
<path d="M478 10H573V120C530 110 490 70 478 10Z" fill="#d8cfc5"/>
<path d="M480 10H555V38L490 54C484 40 480 25 480 10Z" fill="#6b4f24"/><path d="M480 10H553V26L480 36Z" fill="#e2c23a"/><path d="M482 13H550V20L482 24Z" fill="#d92f2f"/><path d="M484 36L553 28V38L490 52Z" fill="#5b7f2e"/>
<path d="M535 65L570 80 556 112 520 92Z" fill="#ff9fdc"/>
<path d="M573 120C530 130 490 170 478 237H573Z" fill="#d8cfc5"/>
<path d="M510 160L555 135 568 165 545 178 540 190 530 182 520 186Z" fill="#cbe870"/>
<path d="M478 237V210L495 205 530 212 510 237Z" fill="#f23ea0"/><path d="M545 205H573V237H545Z" fill="#f3e08a"/>
</g>
<rect x="780" y="117" width="359" height="222" rx="18" fill="#4a3578"/>
<text class="w" style="font-size:13px" x="795" y="129" textLength="275" lengthAdjust="spacingAndGlyphs">• Arpofil, et al. Sexism in the workplace and women safety, 2023</text>
<text class="b" x="798" y="138" textLength="304" lengthAdjust="spacingAndGlyphs">https://www.researchgate.net/publication/sexism-workplace-women</text>
<text class="b" x="798" y="148" textLength="48" lengthAdjust="spacingAndGlyphs">safety.html</text>
<text class="w" style="font-size:13px" x="795" y="158" textLength="325" lengthAdjust="spacingAndGlyphs">• Cabigting, M. Sexism in Filipino culture: A sexual harassment and street hol</text>
<text class="w" style="font-size:13px" x="798" y="168" textLength="190" lengthAdjust="spacingAndGlyphs">among Filipino women, 2020 DOI.</text>
<text class="b" x="798" y="177" textLength="330" lengthAdjust="spacingAndGlyphs">https://www.researchgate.net/Sexism_in_Filipino_culture_street</text>
<text class="b" x="798" y="186" textLength="206" lengthAdjust="spacingAndGlyphs">https://doi.org/10.13140/RG.2.2</text>
<text class="w" style="font-size:13px" x="795" y="197" textLength="325" lengthAdjust="spacingAndGlyphs">• Coulibay, Juan. Perspectives on sexism in urban spaces and sexual assault</text>
<text class="w" style="font-size:13px" x="798" y="207" textLength="110" lengthAdjust="spacingAndGlyphs">Southern Open Journal, vol. 2024</text>
<text class="b" x="798" y="215" textLength="326" lengthAdjust="spacingAndGlyphs">https://southernopenjournal.org/article/harassment-in-public-spaces-filipino</text>
<text class="b" x="798" y="224" textLength="32" lengthAdjust="spacingAndGlyphs">2023.html</text>
<text class="w" style="font-size:13px" x="795" y="236" textLength="327" lengthAdjust="spacingAndGlyphs">• Filipina, M. P. Understanding women&#39;s lives in the Philippines: Journal of Women</text>
<text class="w" style="font-size:13px" x="798" y="246" textLength="288" lengthAdjust="spacingAndGlyphs">Studies Vol. 2. Retrieved 2023 from: journal.ph</text>
<text class="b" x="798" y="255" textLength="100" lengthAdjust="spacingAndGlyphs">https://journal.ph/women</text>
<text class="w" style="font-size:13px" x="795" y="267" textLength="331" lengthAdjust="spacingAndGlyphs">• Fundador, A. Sexism and cat-calling in the Philippines: Perspectives from the</text>
<text class="w" style="font-size:13px" x="798" y="276" textLength="280" lengthAdjust="spacingAndGlyphs">World Health Organization, 4(3): 1–8. Retrieved from</text>
<text class="b" x="798" y="285" textLength="150" lengthAdjust="spacingAndGlyphs">https://who.int/sexism/report</text><text class="w" style="font-size:13px" x="952" y="285" textLength="110" lengthAdjust="spacingAndGlyphs">(Accessed 20 Aug 2023).</text>
<text class="w" style="font-size:13px" x="795" y="296" textLength="325" lengthAdjust="spacingAndGlyphs">• Perry, S. S. et al. Street sexual harassment and its effects: Filipino women</text>
<text class="b" x="798" y="308" textLength="322" lengthAdjust="spacingAndGlyphs">https://journals.sagepub.com/doi/10.1177/filipinos-street-harassment-women</text>
<text class="b" x="798" y="318" textLength="330" lengthAdjust="spacingAndGlyphs">Global Gender in the Philippines and Abroad: An Overview Update in Higher Education.</text>
<text class="b" x="798" y="328" textLength="332" lengthAdjust="spacingAndGlyphs">Lima, Pampanga, or Interviewing and Human Rights to Women&#39;s Spaces on Lab.</text>
</g>
</g>

<!-- ROW 2 B -->
<g transform="translate(470 370) scale(.33333)">
<g clip-path="url(#c9)">
<rect x="27" y="30" width="576" height="323" fill="#d4358d"/>
<path d="M27 30H425L418 85 395 92 388 125 378 162 350 170 330 195 290 192 270 215 235 200 195 218 165 195 120 208 85 195 65 170 27 175Z" fill="#fff" stroke="#fff" stroke-width="4" stroke-linejoin="round"/>
<rect x="85" y="51" width="495" height="28" rx="14" fill="#4a3578"/>
<circle cx="63" cy="65" r="13" fill="#e0c0f8"/><text class="p" x="56" y="69" textLength="14" lengthAdjust="spacingAndGlyphs">09</text>
<rect x="89" y="57" width="135" height="17" rx="8.500" fill="#e0c0f8"/><text class="p" x="140" y="69" textLength="34" lengthAdjust="spacingAndGlyphs">Closing</text>
<rect x="425" y="57" width="151" height="17" rx="8.500" fill="#e0c0f8"/><text class="p" x="447" y="69" textLength="116" lengthAdjust="spacingAndGlyphs">Presented by Group 3</text>
<text class="c" style="stroke-width:4" font-size="62" x="50" y="148" textLength="288" lengthAdjust="spacingAndGlyphs">GROUP 3</text>
<ellipse cx="526" cy="138" rx="60" ry="42" fill="#dcc0f8" stroke="#4a3578" stroke-width="2.500"/>
<text x="476" y="124" font-size="13" font-weight="bold" fill="#4a3578" textLength="100" lengthAdjust="spacingAndGlyphs" transform="rotate(-10 526 115)">Yummylicious bunch</text>
<path d="M495 167c-3-16 6-28 18-36l12-20c3 12 8 20 16 26 8 8 10 18 8 28-4 4-10 4-14 0-4 4-10 6-16 3-8 3-18 4-24-1z" fill="#ffb800" stroke="#8a5a00" stroke-width="1"/>
<path d="M510 165c2-12 6-20 14-28M526 166c0-10 2-18 4-26" stroke="#a86f00" stroke-width="1.500" fill="none"/>
<text class="y" style="font-size:15px" x="371" y="194" textLength="80" lengthAdjust="spacingAndGlyphs">MEMBERS:</text>
<g>
<text class="w" x="357" y="218">•</text><text class="w" x="369" y="218" textLength="142" lengthAdjust="spacingAndGlyphs">Daupusa, Nicole M.</text>
<text class="w" x="357" y="242">•</text><text class="w" x="369" y="242" textLength="174" lengthAdjust="spacingAndGlyphs">Franco, Athena Sofia T.</text>
<text class="w" x="357" y="263">•</text><text class="w" x="369" y="263" textLength="198" lengthAdjust="spacingAndGlyphs">Magsalayo, Cherry Anne M.</text>
<text class="w" x="357" y="287">•</text><text class="w" x="369" y="287" textLength="170" lengthAdjust="spacingAndGlyphs">Masopol, Erjelza Mae G.</text>
<text class="w" x="357" y="310">•</text><text class="w" x="369" y="310" textLength="180" lengthAdjust="spacingAndGlyphs">Nuñez, Rashjela Faith B.</text>
<text class="w" x="357" y="335">•</text><text class="w" x="369" y="335" textLength="132" lengthAdjust="spacingAndGlyphs">Payumolo, Irene S.</text>
</g>
<path d="M112 353c4-24 20-36 36-56 14-18 32-34 50-34 12 0 20 8 24 24 4-16 14-24 26-24 16 0 30 14 40 32 14 22 36 36 48 58h-46c-6-20-26-32-45-30-12 2-20 8-24 14-4-6-14-12-26-14-20-2-34 10-38 30z" fill="#dcc0f8" stroke="#fff" stroke-width="3"/>
<path d="M222 292c6-6 12-5 15 0-1 8-8 14-15 20-8-6-14-12-14-20 3-5 9-6 14 0z" fill="#ffb800"/>
<use href="#cl" transform="translate(85 288) scale(.7)"/><use href="#cl" transform="translate(52 312) scale(.4)"/>
<use href="#s" transform="translate(310 247) scale(2.200)"/><use href="#s" transform="translate(288 230) scale(1)"/><use href="#s" transform="translate(290 267) scale(1)"/><use href="#s" transform="translate(140 257) scale(1.300)"/><use href="#s" transform="translate(150 268) scale(.4)"/>
</g>
<rect x="675" y="30" width="576" height="323" rx="24" fill="#ebecf0"/>
<path d="M963.500 169v47M940 192.500h47" stroke="#25272b" stroke-width="4.500"/>
</g>
</svg>
</body></html>
